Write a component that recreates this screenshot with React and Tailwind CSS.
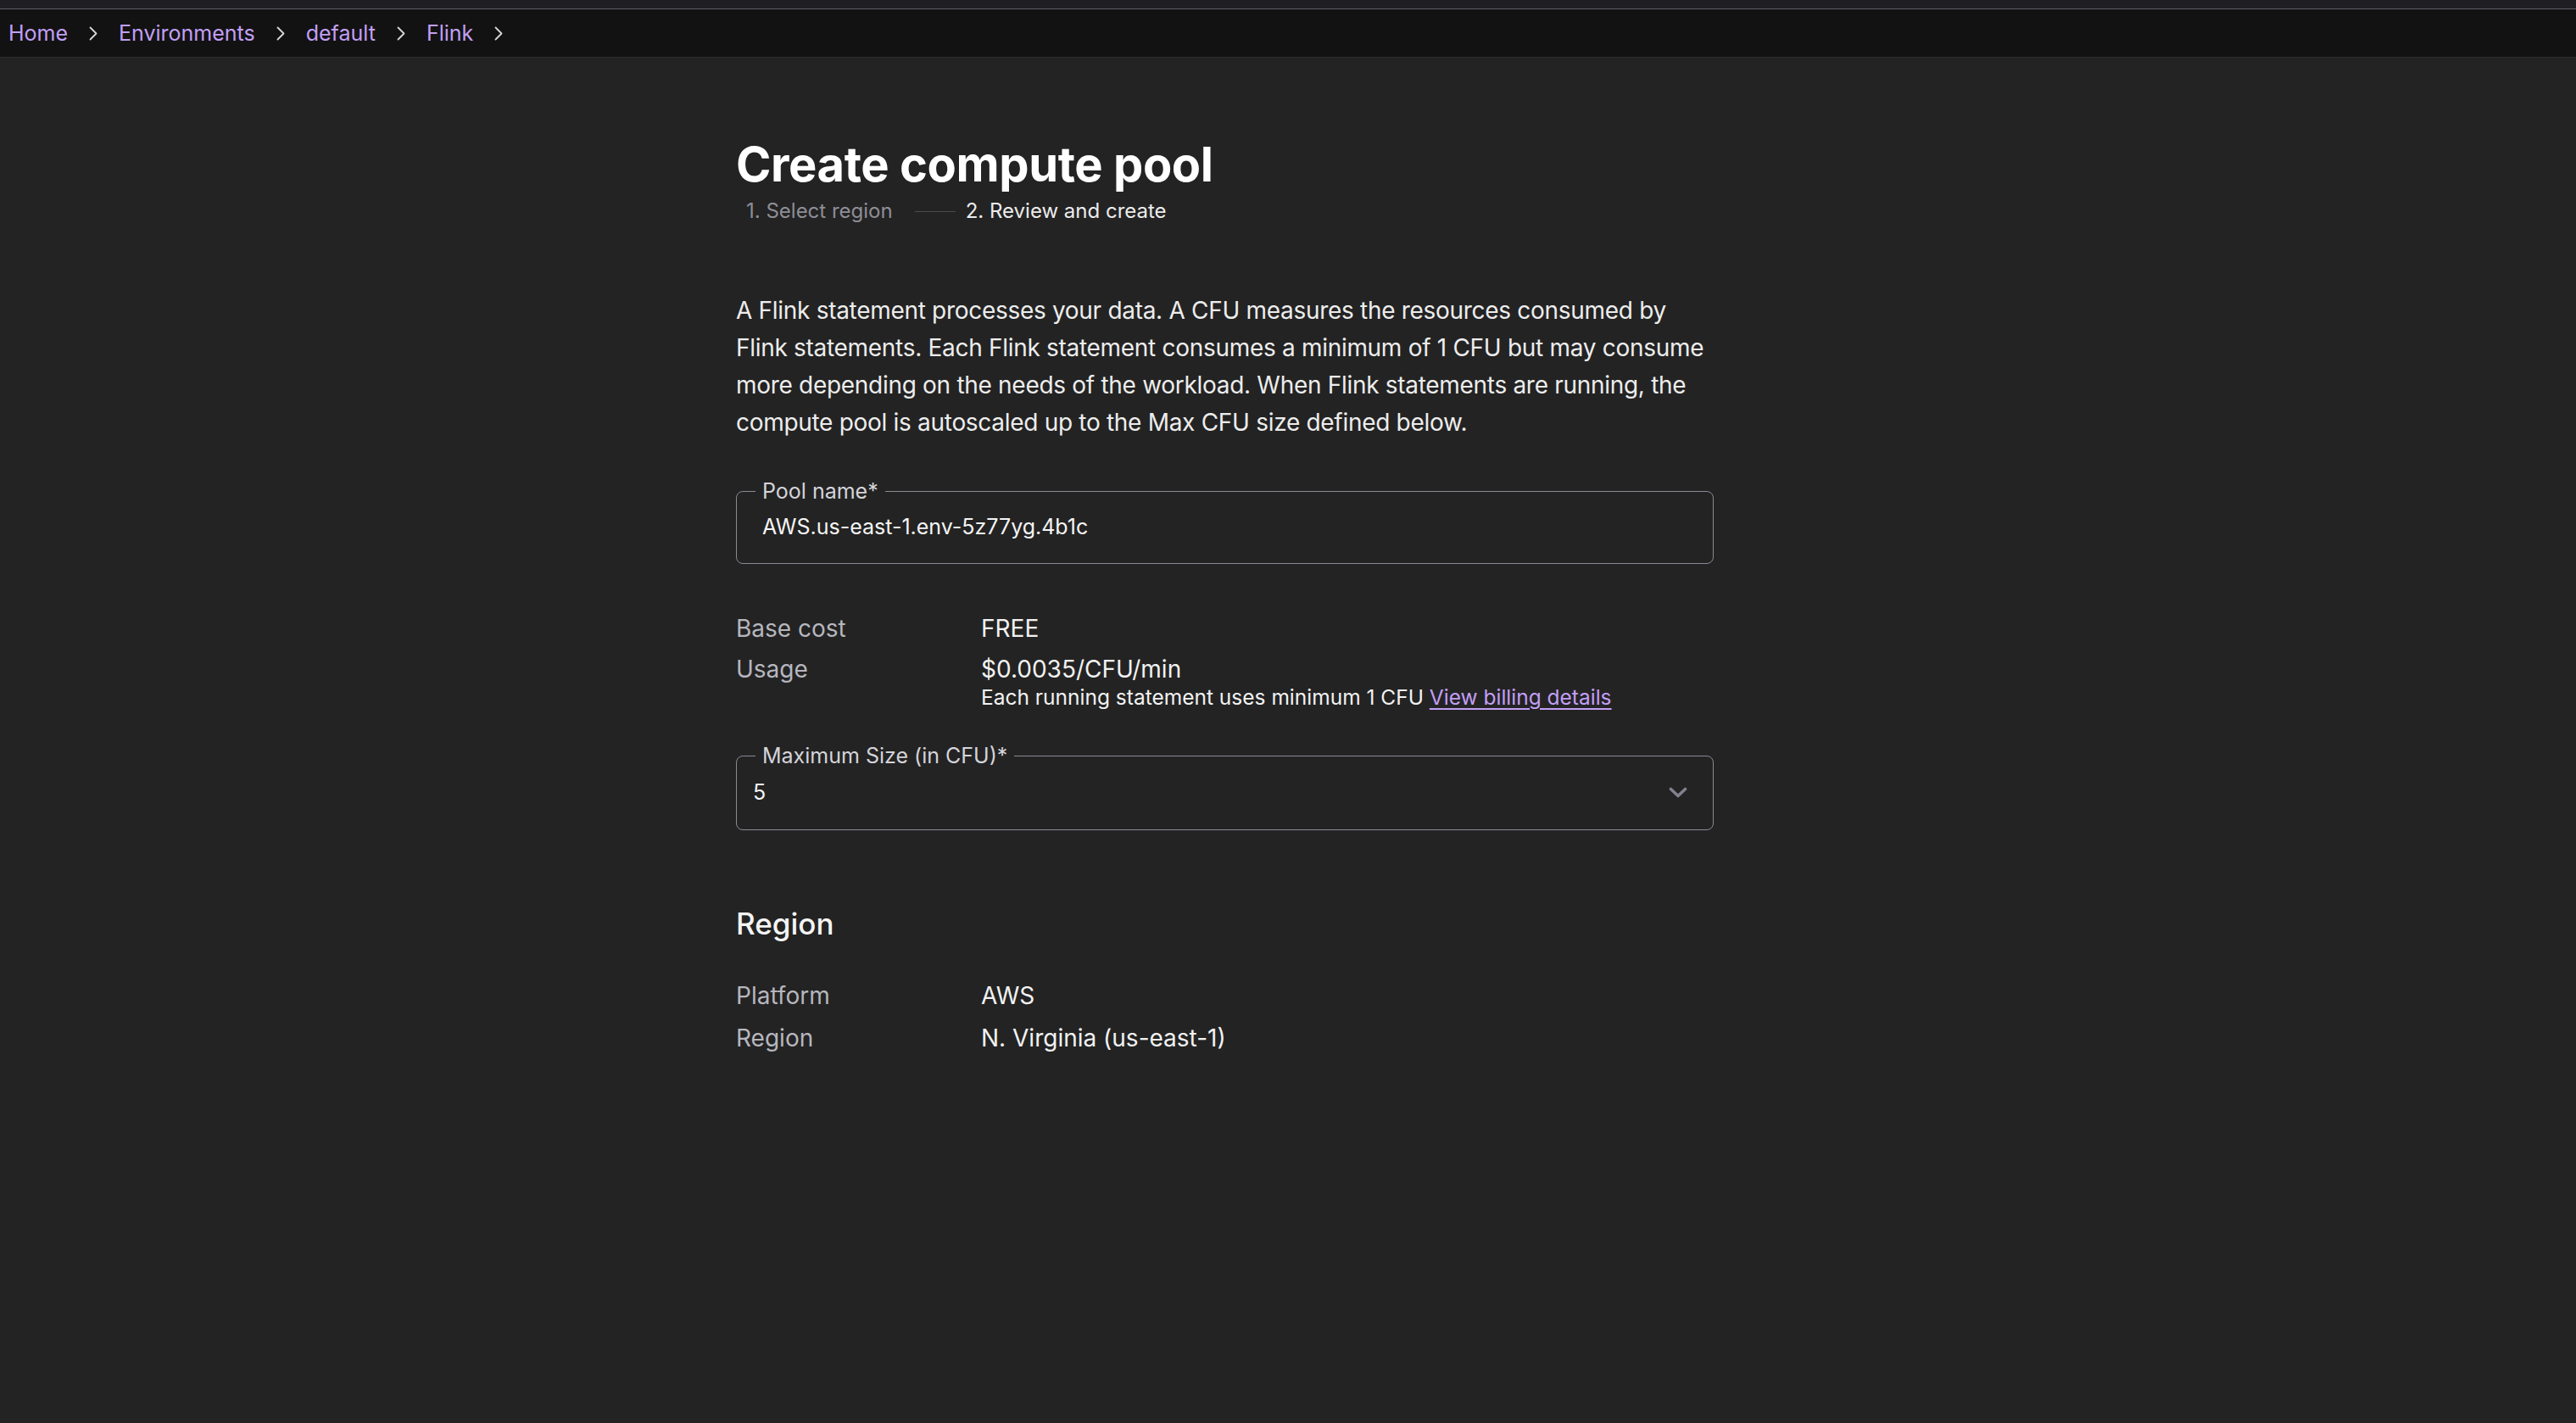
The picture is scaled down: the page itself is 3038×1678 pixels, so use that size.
import { useState } from "react";

const crumbs = ["Home", "Environments", "default", "Flink"];

function Crumb({ label }) {
  return (
    <div className="flex items-center">
      <a className="text-[#c29ff5] text-[25px] leading-[32px] cursor-pointer">{label}</a>
      <svg className="mx-[24px]" width="12" height="17" viewBox="0 0 12 17" fill="none">
        <path d="M2.5 1.5 L9.5 8.5 L2.5 15.5" stroke="#d6d6d6" strokeWidth="1.8" strokeLinecap="round" strokeLinejoin="round" />
      </svg>
    </div>
  );
}

function InfoRow({ label, children }) {
  return (
    <div className="grid grid-cols-[289px_1fr]">
      <span className="text-[#b6b6be] text-[28px] leading-[34px]">{label}</span>
      <div className="text-[#f2f2f2] text-[28px] leading-[34px]">{children}</div>
    </div>
  );
}

export default function App() {
  const [poolName, setPoolName] = useState("AWS.us-east-1.env-5z77yg.4b1c");
  const [maxSize, setMaxSize] = useState("5");

  return (
    <div className="min-h-screen bg-[#232323] flex flex-col" style={{ fontFamily: "Inter, 'Noto Sans', sans-serif" }}>
      {/* Top strip + breadcrumb */}
      <div className="h-[10px] bg-[#1f1f23]" />
      <div className="h-[58px] bg-[#121212] border-t border-t-[#5e5e64] border-b border-b-[#2e2e2e] flex items-center pl-[10px]">
        {crumbs.map((c) => (
          <Crumb key={c} label={c} />
        ))}
      </div>

      <main className="w-[1302px] mx-auto pt-[94px] pb-[200px]">
        <div className="w-[1153px]">
          <h1 className="text-white text-[56px] leading-[64px] font-bold tracking-[-0.4px]">Create compute pool</h1>

          {/* Stepper */}
          <div className="mt-[7px] pl-[12px] flex items-center text-[24px] leading-[32px]">
            <span className="text-[#8e8e97]">1. Select region</span>
            <span className="ml-[26px] mr-[12px] w-[48px] h-px bg-[#4a4a4e]" />
            <span className="text-[#ececec]">2. Review and create</span>
          </div>

          <p className="mt-[79px] text-[#ededed] text-[28px] leading-[44px] tracking-[-0.3px]">
            A Flink statement processes your data. A CFU measures the resources consumed by Flink statements. Each Flink
            statement consumes a minimum of 1 CFU but may consume more depending on the needs of the workload. When Flink
            statements are running, the compute pool is autoscaled up to the Max CFU size defined below.
          </p>

          {/* Pool name */}
          <fieldset className="mt-[46px] border border-[#8a8a95] rounded-[8px] pb-[14px]">
            <legend className="ml-[22px] px-[8px] text-[25px] leading-[26px] text-[#d4d4da]">Pool name*</legend>
            <input
              value={poolName}
              onChange={(e) => setPoolName(e.target.value)}
              className="block w-full h-[58px] pl-[30px] pr-[30px] bg-transparent text-[#f4f4f4] text-[25px] outline-none"
            />
          </fieldset>

          {/* Costs */}
          <div className="mt-[59px] flex flex-col gap-[14px]">
            <InfoRow label="Base cost">FREE</InfoRow>
            <InfoRow label="Usage">
              <div>$0.0035/CFU/min</div>
            </InfoRow>
          </div>
          <div className="grid grid-cols-[289px_1fr]">
            <span />
            <div className="text-[#f2f2f2] text-[24.5px] leading-[32px]">
              Each running statement uses minimum 1 CFU{" "}
              <a className="text-[#c29ff5] underline underline-offset-[4px] cursor-pointer">View billing details</a>
            </div>
          </div>

          {/* Max size */}
          <fieldset className="mt-[40px] border border-[#8a8a95] rounded-[8px] pb-[12px]">
            <legend className="ml-[22px] px-[8px] text-[25px] leading-[26px] text-[#d4d4da]">Maximum Size (in CFU)*</legend>
            <div className="relative h-[62px] flex items-center">
              <select
                value={maxSize}
                onChange={(e) => setMaxSize(e.target.value)}
                className="appearance-none w-full h-full pl-[19px] pr-[60px] bg-transparent text-[#f4f4f4] text-[25px] outline-none"
              >
                {[1, 2, 3, 4, 5, 10, 20, 30, 40, 50].map((n) => (
                  <option key={n} value={n} className="bg-[#232323]">
                    {n}
                  </option>
                ))}
              </select>
              <svg className="absolute right-[30px] pointer-events-none" width="22" height="14" viewBox="0 0 22 14" fill="none">
                <path d="M2.5 2.5 L11 10.5 L19.5 2.5" stroke="#80808e" strokeWidth="3.6" strokeLinecap="round" strokeLinejoin="round" />
              </svg>
            </div>
          </fieldset>

          {/* Region */}
          <h2 className="mt-[88px] text-[#f4f4f4] text-[35px] leading-[44px] font-medium">Region</h2>
          <div className="mt-[46px] flex flex-col gap-[16px]">
            <InfoRow label="Platform">AWS</InfoRow>
            <InfoRow label="Region">N. Virginia (us-east-1)</InfoRow>
          </div>
        </div>
      </main>
    </div>
  );
}
